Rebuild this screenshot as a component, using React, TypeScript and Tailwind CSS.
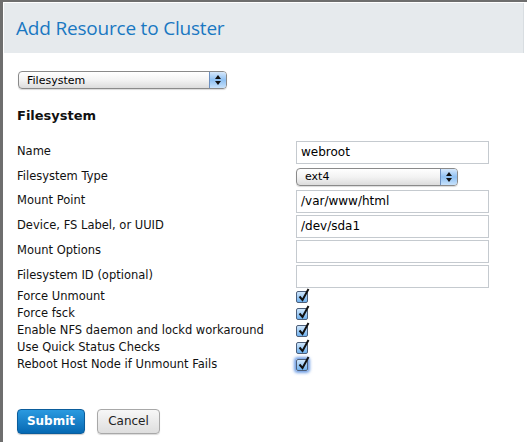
import React from "react";

const font = { fontFamily: '"DejaVu Sans", "Liberation Sans", sans-serif' };

function MacSelect({ value, width }: { value: string; width: string }) {
  return (
    <div
      className={`relative flex h-[18px] ${width} items-center rounded-[4px] border border-[#8a8a8a] bg-gradient-to-b from-white via-[#f3f3f3] to-[#dcdcdc] shadow-[0_1px_1px_rgba(0,0,0,0.15)]`}
    >
      <span className="flex-1 pl-[8px] text-[11px] leading-none text-black">{value}</span>
      <span className="flex h-full w-[17px] flex-col items-center justify-center gap-[2px] rounded-r-[3px] border-l border-[#6c8fbf] bg-gradient-to-b from-[#d6e8fb] via-[#8ec0f2] to-[#c8e2fb]">
        <svg width="6" height="4" viewBox="0 0 6 4">
          <path d="M3 0 L6 4 L0 4 Z" fill="#111" />
        </svg>
        <svg width="6" height="4" viewBox="0 0 6 4">
          <path d="M0 0 L6 0 L3 4 Z" fill="#111" />
        </svg>
      </span>
    </div>
  );
}

function TextBox({ value }: { value?: string }) {
  return (
    <div className="flex h-[23px] w-[193px] items-center border border-[#c5cacf] bg-white px-[4px] text-[12px] text-black">
      {value}
    </div>
  );
}

function Check({ focus }: { focus?: boolean }) {
  return (
    <div
      className={`relative h-[12px] w-[12px] rounded-[2px] border border-[#4d5f7a] bg-gradient-to-b from-[#cfe6fb] to-[#6fb1ee] ${
        focus ? "shadow-[0_0_3px_2px_rgba(70,130,220,0.75)]" : ""
      }`}
    >
      <svg className="absolute -top-[4px] left-[1px]" width="12" height="14" viewBox="0 0 12 14">
        <path d="M1.5 8.5 L4.5 12 L10.5 1" stroke="#111" strokeWidth="2" fill="none" />
      </svg>
    </div>
  );
}

const fields: { label: string; kind: "text" | "select"; value?: string }[] = [
  { label: "Name", kind: "text", value: "webroot" },
  { label: "Filesystem Type", kind: "select", value: "ext4" },
  { label: "Mount Point", kind: "text", value: "/var/www/html" },
  { label: "Device, FS Label, or UUID", kind: "text", value: "/dev/sda1" },
  { label: "Mount Options", kind: "text" },
  { label: "Filesystem ID (optional)", kind: "text" },
];

const checks = [
  "Force Unmount",
  "Force fsck",
  "Enable NFS daemon and lockd workaround",
  "Use Quick Status Checks",
  "Reboot Host Node if Unmount Fails",
];

export default function App() {
  return (
    <div className="h-[442px] w-[527px] overflow-hidden bg-white" style={font}>
      <div className="h-full border-t-2 border-l-[3px] border-[#6e6e6e] pt-px pl-px">
        {/* header */}
        <div className="flex h-[50px] w-[520px] items-center border-r border-[#d8dde1] bg-[#e6eaed] pl-[12px]">
          <h1
            className="text-[19px] font-medium tracking-[-0.2px] text-[#1a78c2]"
            style={{ fontFamily: '"Open Sans", sans-serif' }}
          >
            Add Resource to Cluster
          </h1>
        </div>

        <div className="pl-[13px] pt-[18px]">
          <div className="ml-px">
            <MacSelect value="Filesystem" width="w-[209px]" />
          </div>

          <h2 className="mt-[17px] text-[13px] font-bold text-[#111]">Filesystem</h2>

          <div className="mt-[14px] flex flex-col">
            {fields.map((f) => (
              <div
                key={f.label}
                className={`flex items-center ${f.kind === "select" ? "h-[24px]" : "h-[25px]"}`}
              >
                <span className="w-[279px] text-[11.5px] text-[#111]">{f.label}</span>
                {f.kind === "select" ? (
                  <MacSelect value={f.value ?? ""} width="w-[162px]" />
                ) : (
                  <TextBox value={f.value} />
                )}
              </div>
            ))}
          </div>

          <div className="flex flex-col">
            {checks.map((c, i) => (
              <div key={c} className="flex h-[17px] items-center">
                <span className="w-[279px] text-[11.5px] text-[#111]">{c}</span>
                <Check focus={i === checks.length - 1} />
              </div>
            ))}
          </div>

          <div className="mt-[35px] flex gap-[12px]">
            <button className="h-[25px] w-[68px] rounded-[4px] border border-[#0b5d9c] bg-gradient-to-b from-[#2a9ae0] to-[#0569b3] text-[12px] font-bold text-white shadow-[0_1px_1px_rgba(0,0,0,0.2)]">
              Submit
            </button>
            <button className="h-[25px] w-[63px] rounded-[4px] border border-[#a8a8a8] bg-gradient-to-b from-[#f7f7f7] to-[#dedede] text-[12px] text-[#222] shadow-[0_1px_1px_rgba(0,0,0,0.15)]">
              Cancel
            </button>
          </div>
        </div>
      </div>
    </div>
  );
}
